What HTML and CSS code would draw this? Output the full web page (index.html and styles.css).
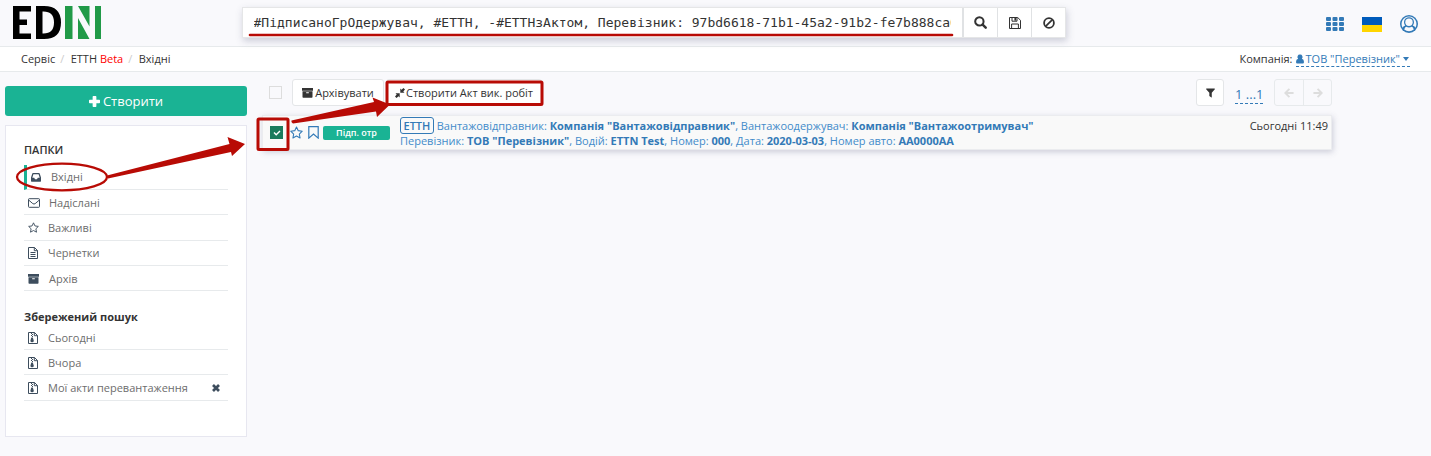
FILE: index.html
```html
<!DOCTYPE html>
<html lang="uk">
<head>
<meta charset="utf-8">
<title>EDIN</title>
<link rel="stylesheet" href="styles.css">
</head>
<body>
<svg class="sprite" aria-hidden="true">
  <symbol id="search" viewBox="0 0 14 14"><circle cx="5.8" cy="5.8" r="4.5" fill="none" stroke="currentColor" stroke-width="2.2"/><path d="M9.3 9.3l3.3 3.3" stroke="currentColor" stroke-width="2.6" stroke-linecap="round"/></symbol>
  <symbol id="save" viewBox="0 0 12 12"><path d="M.5.5h8.2l2.8 2.8v8.2H.5zM2.6 11.3V7h6.8v4.3M3 .6v3.6h5V.6" fill="none" stroke="currentColor"/><path d="M5.4 1h1.8v2.6H5.4z" fill="currentColor"/></symbol>
  <symbol id="ban" viewBox="0 0 12 12"><circle cx="6" cy="6" r="4.9" fill="none" stroke="currentColor" stroke-width="1.8"/><path d="M2.6 9.4l6.8-6.8" stroke="currentColor" stroke-width="1.7"/></symbol>
  <symbol id="grid" viewBox="0 0 18 14"><path d="M1 0h3q1 0 1 1v2q0 1-1 1H1Q0 4 0 3V1q0-1 1-1zm6.5 0h3q1 0 1 1v2q0 1-1 1h-3q-1 0-1-1V1q0-1 1-1zM14 0h3q1 0 1 1v2q0 1-1 1h-3q-1 0-1-1V1q0-1 1-1zM1 5h3q1 0 1 1v2q0 1-1 1H1Q0 9 0 8V6q0-1 1-1zm6.500 0h3q1 0 1 1v2q0 1-1 1h-3q-1 0-1-1V6q0-1 1-1zM14 5h3q1 0 1 1v2q0 1-1 1h-3q-1 0-1-1V6q0-1 1-1zM1 10h3q1 0 1 1v2q0 1-1 1H1q-1 0-1-1v-2q0-1 1-1zm6.500 0h3q1 0 1 1v2q0 1-1 1h-3q-1 0-1-1v-2q0-1 1-1zM14 10h3q1 0 1 1v2q0 1-1 1h-3q-1 0-1-1v-2q0-1 1-1z" fill="currentColor"/></symbol>
  <symbol id="account" viewBox="0 0 18 18"><circle cx="9" cy="9" r="9" fill="currentColor"/><path fill="#f9f9fc" d="M9 1.500A7.500 7.500 0 0 0 2.600 12.800Q3.400 10.800 5.200 10.500A5 5 0 1 1 12.800 10.500Q14.600 10.800 15.400 12.800A7.500 7.500 0 0 0 9 1.500z"/><circle cx="9" cy="7.300" r="3.700" fill="#f9f9fc"/><path d="M4.200 14.600Q5 12 6.200 11.800q2.800 1.500 5.600 0Q13 12 13.800 14.600A7.500 7.500 0 0 1 4.200 14.600z" fill="#f9f9fc"/></symbol>
  <symbol id="user" viewBox="0 0 9 10"><path fill="currentColor" d="M4.500 0a2.700 2.700 0 0 1 2.100 4.600Q9 5 9 8.300q0 1.700-1.500 1.700h-6Q0 10 0 8.300 0 5 2.400 4.600A2.700 2.700 0 0 1 4.500 0z"/></symbol>
  <symbol id="plus" viewBox="0 0 10 10"><path fill="currentColor" d="M4 0h2q.7 0 .7.700v2.600h2.600q.7 0 .7.700v2q0 .7-.7.7H6.700v2.600q0 .7-.7.7H4q-.7 0-.7-.7V6.700H.7Q0 6.700 0 6V4q0-.7.7-.7h2.600V.7Q3.300 0 4 0z"/></symbol>
  <symbol id="inbox" viewBox="0 0 10 9"><path fill="currentColor" fill-rule="evenodd" d="M2 0h6q.5 0 .7.500L10 4.400V8q0 .7-.6.700H.6Q0 8.700 0 8V4.400L1.300.500Q1.500 0 2 0zm.4 1.300L1.300 4.700h1.900l.8 1.500h2l.8-1.500h1.900L7.600 1.300z"/></symbol>
  <symbol id="mail" viewBox="0 0 12 10"><path fill="none" stroke="currentColor" d="M1.200.7h9.600q.7 0 .7.700v7.100q0 .8-.7.800H1.200q-.7 0-.7-.8V1.400Q.5.700 1.200.7zM.6 2l4.200 3.600q1.200.9 2.400 0L11.400 2"/></symbol>
  <symbol id="star" viewBox="0 0 12 12"><path fill="none" stroke="currentColor" stroke-linejoin="round" d="M6 .9l1.600 3.400 3.700.5-2.700 2.600.7 3.700L6 9.300l-3.300 1.800.7-3.700L.7 4.800l3.700-.5z"/></symbol>
  <symbol id="doc" viewBox="0 0 10 12"><path fill="none" stroke="currentColor" d="M.5.500h6l3 3v8h-9zM6.300.500v3.200h3.200M2.500 5.500h5M2.500 7.500h5M2.500 9.500h5"/></symbol>
  <symbol id="zip" viewBox="0 0 10 12"><path fill="none" stroke="currentColor" d="M.5.500h6l3 3v8h-9zM6.300.500v3.200h3.200"/><path fill="currentColor" d="M3 1h1v1H3zm1 1h1v1H4zM3 3h1v1H3zm1 1h1v1H4zM3.300 5.500h1.500l1 3.300q0 1.500-1.700 1.500T2.400 8.800z"/></symbol>
  <symbol id="archive" viewBox="0 0 11 10"><path fill="currentColor" fill-rule="evenodd" d="M0 0h11v2.700H0zM.5 3.300h10V9q0 .7-.7.700H1.200Q.5 9.700.5 9zm3.700.9v1h2.600v-1z"/></symbol>
  <symbol id="cross" viewBox="0 0 8 8"><path d="M1 1l6 6m0-6L1 7" stroke="currentColor" stroke-width="2.700"/></symbol>
  <symbol id="compress" viewBox="0 0 10 10"><path fill="currentColor" d="M5.300.5l1.200 1.200L8.500 0 10 1.500 8.300 3.500l1.200 1.200H5.300zM.5 5.300h4.200v4.200L3.500 8.300 1.500 10 0 8.500l1.700-2z"/></symbol>
  <symbol id="bookmark" viewBox="0 0 11 13"><path fill="none" stroke="currentColor" stroke-width="1.200" d="M.8.700h9.400v11.400L5.500 8 .8 12.100z"/></symbol>
  <symbol id="filter" viewBox="0 0 10 10"><path fill="currentColor" d="M.6 0h8.800q.8.200.4.900L6.400 4.700V9.600q-.3.500-.8.200L3.700 8.200V4.700L.2.900Q-.2.200.6 0z"/></symbol>
  <symbol id="left" viewBox="0 0 10 10"><path fill="none" stroke="currentColor" stroke-width="1.900" d="M5.400.8L1.300 5l4.100 4.200M1.600 5H9.600"/></symbol>
  <symbol id="right" viewBox="0 0 10 10"><path fill="none" stroke="currentColor" stroke-width="1.900" d="M4.600.8L8.700 5 4.600 9.200M8.400 5H.4"/></symbol>
</svg>

<header class="topbar">
  <svg class="logo" viewBox="0 0 89 34" role="img" aria-label="EDIN"><path d="M0 0h18v5.500H6.500v8H14V19H6.500v8.500H18V33H0zM23 0h8q17 0 17 16.500T31 33h-8zm6.500 5.500v22Q41 28 41 16.500T29.500 5.500z" fill-rule="evenodd"/><path fill="#219a48" d="M52 0h7.500v33H52zM65 0h11.500v20.500zM65 12l11.500 21H65zM82 0h6v33h-6z"/></svg>
  <div class="searchbar">
    <div class="query"><span>#ПідписаноГрОдержувач, #ЕТТН, -#ЕТТНзАктом, Перевізник: 97bd6618-71b1-45a2-91b2-fe7b888ca0</span></div>
    <button class="tool wide"><svg width="13" height="13"><use href="#search"/></svg></button>
    <button class="tool"><svg width="12" height="12"><use href="#save"/></svg></button>
    <button class="tool last"><svg width="12" height="12"><use href="#ban"/></svg></button>
  </div>
  <nav class="account">
    <svg width="18" height="14"><use href="#grid"/></svg>
    <span class="flag"></span>
    <svg width="18" height="18"><use href="#account"/></svg>
  </nav>
</header>

<div class="crumbs">
  <div class="path"><span>Сервіс</span><i>/</i><span>ЕТТН <b>Beta</b></span><i>/</i><span>Вхідні</span></div>
  <div class="company"><span>Компанія:</span><a><svg width="8" height="10"><use href="#user"/></svg><span>ТОВ "Перевізник"</span><u class="caret"></u></a></div>
</div>

<div class="page">
  <aside class="sidebar">
    <button class="create"><svg width="11" height="11"><use href="#plus"/></svg>Створити</button>
    <div class="panel">
      <h5>ПАПКИ</h5>
      <ul>
        <li class="active"><svg width="10" height="9"><use href="#inbox"/></svg><span>Вхідні</span></li>
        <li class="low"><svg width="12" height="10"><use href="#mail"/></svg><span class="nudge">Надіслані</span></li>
        <li class="tall"><svg width="11" height="11"><use href="#star"/></svg><span class="nudge">Важливі</span></li>
        <li><svg width="10" height="12"><use href="#doc"/></svg><span>Чернетки</span></li>
        <li class="low"><svg width="11" height="10"><use href="#archive"/></svg><span>Архів</span></li>
      </ul>
      <h5 class="saved">Збережений пошук</h5>
      <ul>
        <li><svg width="10" height="12"><use href="#zip"/></svg><span>Сьогодні</span></li>
        <li class="low"><svg width="10" height="12"><use href="#zip"/></svg><span>Вчора</span></li>
        <li class="tall"><svg width="10" height="12"><use href="#zip"/></svg><span>Мої акти перевантаження</span><svg class="remove" width="8" height="8"><use href="#cross"/></svg></li>
      </ul>
    </div>
  </aside>

  <main class="content">
    <div class="actions">
      <span class="check"></span>
      <button class="btn archive"><svg width="11" height="10"><use href="#archive"/></svg>Архівувати</button>
      <button class="btn act"><svg width="10" height="10"><use href="#compress"/></svg>Створити Акт вик. робіт</button>
      <div class="paging">
        <button class="btn filter"><svg width="9" height="10"><use href="#filter"/></svg></button>
        <a class="range">1 ...1</a>
        <div class="arrows"><span><svg width="10" height="10"><use href="#left"/></svg></span><span><svg width="10" height="10"><use href="#right"/></svg></span></div>
      </div>
    </div>
    <div class="row">
      <span class="check on"><svg width="8" height="6" viewBox="0 0 8 6"><path d="M1 2.500l2.200 2.300L7 1" fill="none" stroke="#fff" stroke-width="1.400"/></svg></span>
      <svg class="rowstar" width="13" height="13"><use href="#star"/></svg>
      <svg class="rowmark" width="11" height="13"><use href="#bookmark"/></svg>
      <span class="label">Підп. отр</span>
      <div class="text">
        <p><em>ЕТТН</em> Вантажовідправник: <b>Компанія "Вантажовідправник"</b>, Вантажоодержувач: <b>Компанія "Вантажоотримувач"</b></p>
        <p>Перевізник: <b>ТОВ "Перевізник"</b>, Водій: <b>ETTN Test</b>, Номер: <b>000</b>, Дата: <b>2020-03-03</b>, Номер авто: <b>АА0000АА</b></p>
      </div>
      <time>Сьогодні 11:49</time>
    </div>
  </main>
</div>

<svg class="marks" width="1431" height="456" viewBox="0 0 1431 456" aria-hidden="true">
  <g fill="none" stroke="#b80b05" stroke-width="3">
    <path d="M250 35H952" stroke-linecap="round" stroke-width="2.600"/>
    <rect x="387" y="82" width="155" height="22.500" rx="1"/>
    <rect x="258" y="119" width="30" height="30.500" rx="1"/>
    <ellipse cx="62" cy="177" rx="45" ry="13.300" stroke-width="2.300"/>
  </g>
  <path fill="#b80b05" d="M107 175.500L229.500 144 227.500 137 245 144 232 156 231 152 108 178.500zM291.500 120.500L374 102 372.500 97.500 390 104.500 377 117 376 111.500 293 123.500q-2-1-1.500-3z"/>
</svg>
</body>
</html>
```
FILE: styles.css
```css
* { box-sizing: border-box; }
body {
  margin: 0;
  height: 456px;
  overflow: hidden;
  position: relative;
  background: #f9f9fc;
  color: #333;
  font: 11px/18px "Open Sans", "Noto Sans", sans-serif;
}
button { font: inherit; color: inherit; margin: 0; cursor: pointer; }
svg { flex: none; display: block; }
ul, h5, p { margin: 0; padding: 0; }
.sprite { position: absolute; width: 0; height: 0; }

.topbar {
  height: 47px;
  display: flex;
  align-items: flex-start;
  border-bottom: 1px solid #e7eaec;
  padding: 6px 13px 0;
}
.logo { width: 89px; height: 34px; }
.searchbar {
  display: flex;
  width: 824px;
  height: 31px;
  margin: 1px 0 0 140px;
  background: #fff;
  border: 1px solid #e5e6e7;
  box-shadow: 1px 3px 7px rgba(70, 75, 110, .25);
}
.query {
  flex: 1;
  padding: 0 11px 0 10.500px;
  font: 13px/30px "DejaVu Sans Mono", monospace;
  min-width: 0;
}
.query span { display: block; overflow: hidden; white-space: nowrap; width: 697px; }
.tool {
  width: 34px;
  border: 0;
  border-left: 1px solid #e0e2e4;
  background: #fff;
  padding: 0;
  display: grid;
  place-items: center;
}
.tool.wide { width: 35px; border-left-width: 2px; }
.account {
  margin-left: auto;
  height: 36px;
  display: flex;
  align-items: center;
  gap: 18px;
  color: #337ab7;
}
.flag { width: 20px; height: 15px; background: linear-gradient(#005bbb 50%, #ffd500 50%); }

.crumbs {
  height: 25px;
  display: flex;
  justify-content: space-between;
  align-items: center;
  background: #fff;
  border-bottom: 1px solid #e7eaec;
  padding: 0 21px;
}
.path { display: flex; }
.path i { font-style: normal; color: #ccc; width: 15.500px; padding-left: 5px; }
.path b { color: #f00; font-weight: 400; }
.company { display: flex; align-items: center; gap: 3px; }
.company a {
  display: flex;
  align-items: center;
  height: 16px;
  color: #337ab7;
  border-bottom: 1px dashed #337ab7;
}
.company a span { margin-left: 2px; }
.caret { border: 3.500px solid transparent; border-top: 4px solid #337ab7; border-bottom: 0; margin: 0 1px 0 3px; }

.page { display: flex; gap: 15px; padding: 0 0 0 5px; }
.sidebar { width: 242px; padding-top: 14px; }
.create {
  width: 242px;
  height: 30px;
  display: flex;
  align-items: center;
  justify-content: center;
  gap: 3px;
  border: 0;
  border-radius: 3px;
  background: #1ab394;
  color: #fff;
  font-size: 13px;
}
.panel {
  margin-top: 9px;
  height: 312px;
  padding: 15px 18px;
  background: #fff;
  border: 1px solid #e7e7f0;
}
h5 { font-size: 11px; line-height: 18px; font-weight: 600; padding-bottom: 6px; }
h5.saved { padding: 17px 0 0; font-weight: 700; }
.panel ul { list-style: none; }
.panel li {
  height: 25px;
  display: flex;
  align-items: center;
  padding-left: 4px;
  border-bottom: 1px solid #e7eaec;
  color: #6d6d6d;
}
.panel li.tall { height: 26px; }
.panel li.low { padding-top: 2px; }
.saved + ul li:first-child { height: 24px; }
.saved + ul li.tall { height: 26px; }
.panel li svg { color: #3d4d5d; }
.panel li span { margin-left: 10px; }
.panel li span.nudge { margin-left: 9px; }
.panel li.active { border-left: 3px solid #1ab394; }
.panel li svg.remove { margin: 0 8px 0 auto; }

.content { width: 1070px; }
.actions { display: flex; height: 43px; padding: 7px 0 9px 7px; align-items: center; }
.check { width: 13px; height: 13px; border: 1px solid #ddd; flex: none; }
.btn {
  height: 27px;
  border: 1px solid #e4e6e8;
  border-radius: 3px;
  background: #fff;
  display: flex;
  align-items: center;
  justify-content: center;
  gap: 2px;
  padding: 0;
  white-space: nowrap;
}
.archive { width: 92px; margin-left: 10px; }
.act { width: 156px; margin-left: 2px; gap: 1px; }
.paging { display: flex; align-items: center; margin-left: auto; }
.filter { width: 28px; }
.range { margin: 4px 11px 0; width: 28px; font-size: 13px; line-height: 18px; color: #337ab7; border-bottom: 1px dashed; white-space: nowrap; }
.arrows { display: flex; height: 27px; border: 1px solid #e7eaec; border-radius: 3px; color: #ddd; }
.arrows span { width: 28px; display: grid; place-items: center; }
.arrows span + span { border-left: 1px solid #e7eaec; }

.row {
  display: flex;
  align-items: center;
  height: 35px;
  background: #f9f9f9;
  border: 1px solid #ebecef;
  box-shadow: 1px 2px 6px rgba(70, 75, 110, .25);
  padding: 0 3px 0 7px;
}
.check.on { background: #1a7b5d; border: 0; display: grid; place-items: center; }
.rowstar, .rowmark { color: #337ab7; }
.rowstar { margin-left: 7px; }
.rowmark { margin-left: 5px; }
.label {
  width: 67px;
  height: 14px;
  margin-left: 4px;
  border-radius: 2px;
  background: #1ab394;
  color: #fff;
  font: 600 9px/14px "Open Sans", sans-serif;
  text-align: center;
}
.text { margin-left: 10px; line-height: 15px; color: #428bca; white-space: nowrap; }
.text b { color: #337ab7; }
.text em { font-style: normal; font-weight: 600; color: #337ab7; border: 1px solid; border-radius: 3px; padding: 0 2.500px; }
time { margin-left: auto; align-self: flex-start; line-height: 20px; }

.marks { position: absolute; left: 0; top: 0; pointer-events: none; }
```
